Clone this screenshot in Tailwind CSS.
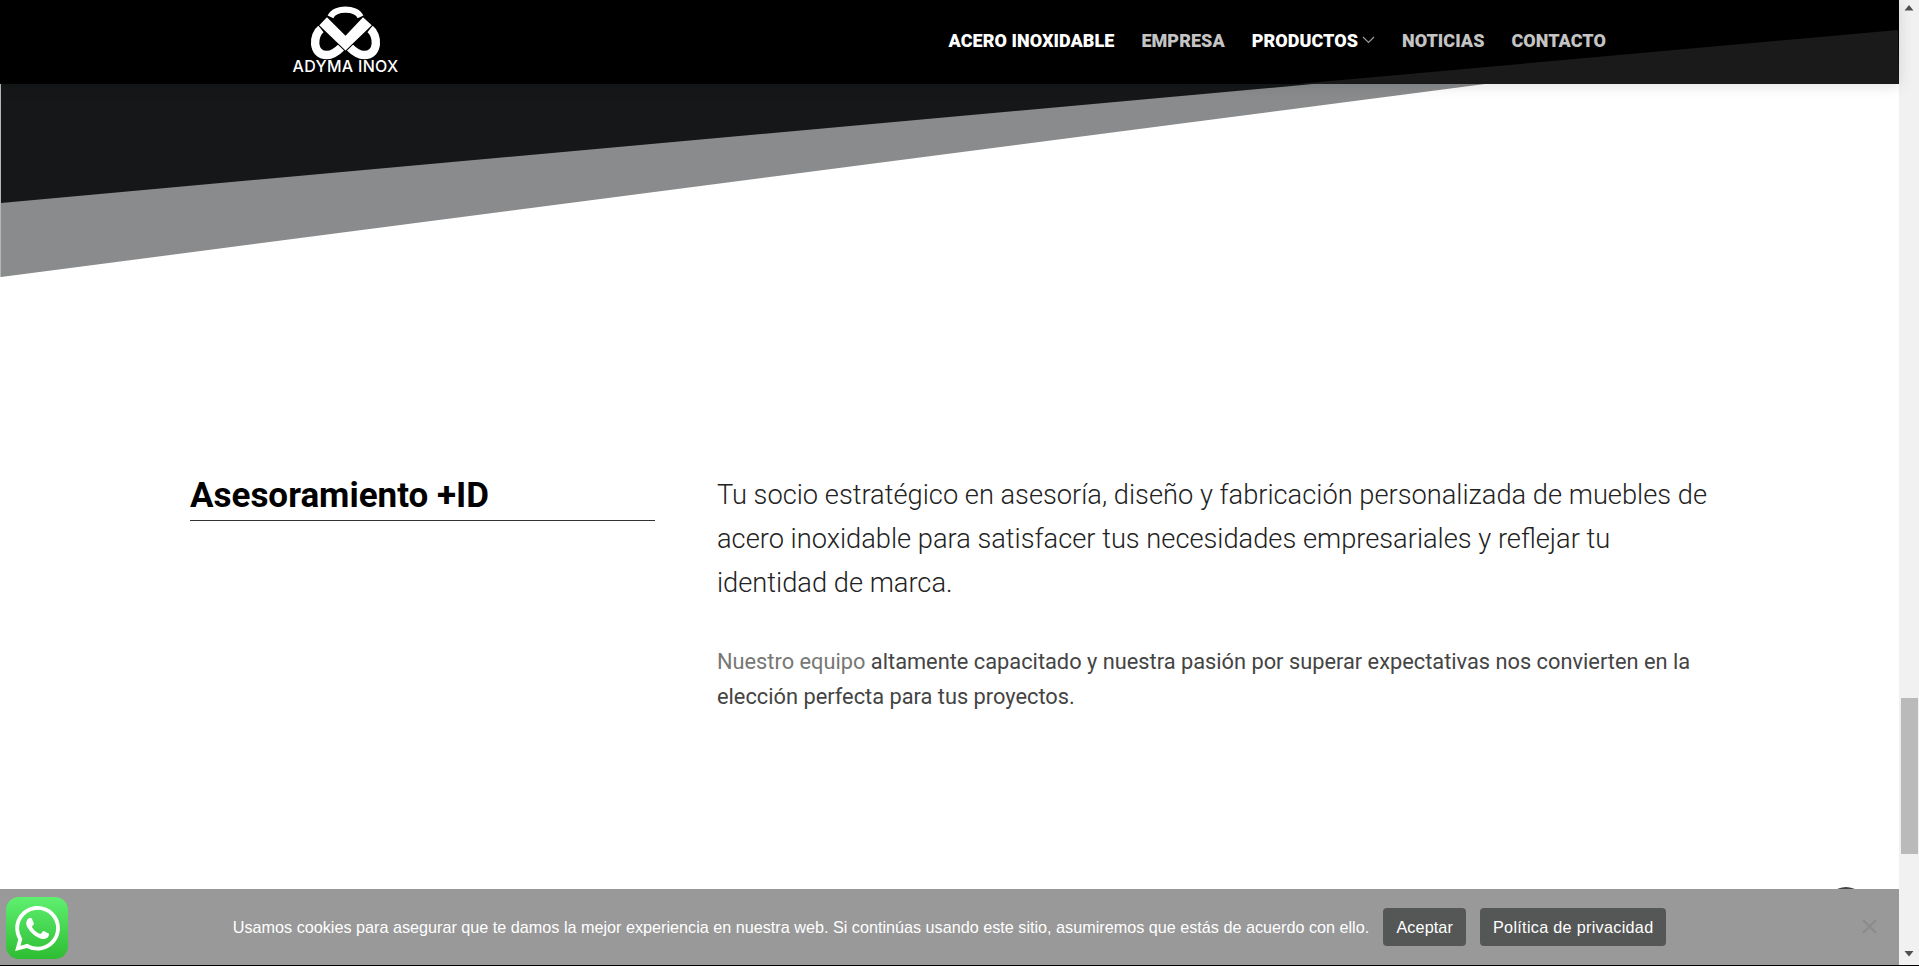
<!DOCTYPE html>
<html lang="es">
<head>
    <meta charset="UTF-8">
    <title>Adyma Inox</title>
    <script src="https://cdn.jsdelivr.net/npm/@tailwindcss/browser@4"></script>
</head>
<body class="bg-white overflow-hidden">
<div class="relative flex w-[1919px] h-[966px] overflow-hidden font-['Roboto',sans-serif]">
    <main class="relative w-[1899px] h-full bg-white">
        <!-- Cuña diagonal -->
        <svg class="absolute left-0 top-0" width="1899" height="300" viewBox="0 0 1899 300">
            <polygon points="1,84 1485,84 1,277" fill="#8a8b8c"/>
            <polygon points="1,84 1313,84 1,203" fill="#161718"/>
            <rect x="0" y="84" width="1" height="193" fill="#b5b5b5"/>
        </svg>

        <!-- Cabecera -->
        <header class="relative z-10 flex items-center justify-between h-[84px] bg-black pl-[293px] pr-[293px] shadow-[0_2px_14px_rgba(0,0,0,0.12)]">
            <svg class="absolute right-0 top-0" width="602" height="84" viewBox="0 0 602 84">
                <polygon points="0,84 601,30 602,84" fill="#1a1a1a"/>
            </svg>
            <a class="relative flex flex-col items-center w-[105px] h-[84px] pt-[3px]">
                <svg width="77" height="60" viewBox="205 5 220 170">
                    <path d="M272 44 C285 16 345 16 358 44" fill="none" stroke="#fff" stroke-width="18"/>
                    <path d="M245 78 C222 95 218 153 262 153 C278 153 292 142 304 130" fill="none" stroke="#fff" stroke-width="24"/>
                    <path d="M385 78 C408 95 412 153 368 153 C352 153 338 142 326 130" fill="none" stroke="#fff" stroke-width="24"/>
                    <polygon points="262,45 315,98 365,45 390,68 315,140 240,68" fill="#fff" stroke="#000" stroke-width="6" paint-order="stroke"/>
                </svg>
                <span class="font-['Inter',sans-serif] font-medium text-[16px] leading-[14px] tracking-[0.3px] text-white whitespace-nowrap -mt-[4px]">ADYMA INOX</span>
            </a>
            <nav class="relative flex items-center gap-[27px] text-[18px] tracking-[0.05px] font-black text-[#c4c4c4] whitespace-nowrap -mt-[4px]">
                <a class="text-white">ACERO INOXIDABLE</a>
                <a>EMPRESA</a>
                <a class="flex items-center gap-[4px] text-white">PRODUCTOS
                    <svg width="13" height="8" viewBox="0 0 13 8" fill="none" stroke="#9a9a9a" stroke-width="1.2"><path d="M1 1l5.500 5.500L12 1"/></svg>
                </a>
                <a>NOTICIAS</a>
                <a>CONTACTO</a>
            </nav>
        </header>

        <!-- Asesoramiento -->
        <section class="relative flex pl-[190px] pt-[385px]">
            <div class="w-[465px] h-[52px] border-b border-[#333]">
                <h2 class="text-[35px] leading-[54px] font-bold text-black">Asesoramiento +ID</h2>
            </div>
            <div class="ml-[62px] w-[995px] pt-[4px]">
                <p class="text-[27.25px] leading-[44px] font-light text-[#222]">Tu socio estratégico en asesoría, diseño y fabricación personalizada de muebles de acero inoxidable para satisfacer tus necesidades empresariales y reflejar tu identidad de marca.</p>
                <p class="mt-[39px] text-[21.8px] leading-[35px] text-[#444]"><span class="text-[#777773]">Nuestro equipo</span> altamente capacitado y nuestra pasión por superar expectativas nos convierten en la elección perfecta para tus proyectos.</p>
            </div>
        </section>

        <!-- Elemento asomando por detrás del aviso -->
        <span class="absolute left-[1826px] top-[887px] w-[40px] h-[40px] rounded-full bg-[#444]"></span>

        <!-- Aviso de cookies -->
        <div class="absolute left-0 bottom-0 z-20 flex items-center justify-center gap-[14px] w-full h-[77px] pb-[2px] bg-[#999] font-['Liberation_Sans',sans-serif] text-[16.2px] text-white">
            <span class="whitespace-nowrap pt-[2px]">Usamos cookies para asegurar que te damos la mejor experiencia en nuestra web. Si continúas usando este sitio, asumiremos que estás de acuerdo con ello.</span>
            <a class="flex items-center justify-center w-[83px] h-[38px] pt-[1px] rounded-[4px] bg-[#555756] tracking-[0.1px]">Aceptar</a>
            <a class="flex items-center justify-center w-[186px] h-[38px] pt-[1px] rounded-[4px] bg-[#555756] tracking-[0.3px]">Política de privacidad</a>
            <svg class="absolute left-[1862px] top-[30px]" width="15" height="15" viewBox="0 0 15 15" stroke="#8c8c8c" stroke-width="2.4"><path d="M1 1l13 13M14 1L1 14"/></svg>
        </div>

        <!-- WhatsApp -->
        <a class="absolute left-[6px] top-[897px] z-30 flex items-center justify-center w-[62px] h-[62px] rounded-[13px] bg-gradient-to-b from-[#5ef06f] to-[#2dbd32]">
            <svg width="45" height="45" viewBox="0 0 24 24" fill="#fff"><path d="M17.472 14.382c-.297-.149-1.758-.867-2.03-.967-.273-.099-.471-.148-.67.15-.197.297-.767.966-.94 1.164-.173.199-.347.223-.644.075-.297-.15-1.255-.463-2.39-1.475-.883-.788-1.48-1.761-1.653-2.059-.173-.297-.018-.458.13-.606.134-.133.298-.347.446-.52.149-.174.198-.298.298-.497.099-.198.05-.371-.025-.52-.075-.149-.669-1.612-.916-2.207-.242-.579-.487-.5-.669-.51-.173-.008-.371-.01-.57-.01-.198 0-.52.074-.792.372-.272.297-1.04 1.016-1.04 2.479 0 1.462 1.065 2.875 1.213 3.074.149.198 2.096 3.2 5.077 4.487.709.306 1.262.489 1.694.625.712.227 1.36.195 1.871.118.571-.085 1.758-.719 2.006-1.413.248-.694.248-1.289.173-1.413-.074-.124-.272-.198-.57-.347m-5.421 7.403h-.004a9.87 9.87 0 01-5.031-1.378l-.361-.214-3.741.982.998-3.648-.235-.374a9.86 9.86 0 01-1.51-5.26c.001-5.45 4.436-9.884 9.888-9.884 2.64 0 5.122 1.03 6.988 2.898a9.825 9.825 0 012.893 6.994c-.003 5.45-4.437 9.884-9.885 9.884m8.413-18.297A11.815 11.815 0 0012.05 0C5.495 0 .16 5.335.157 11.892c0 2.096.547 4.142 1.588 5.945L.057 24l6.305-1.654a11.882 11.882 0 005.683 1.448h.005c6.554 0 11.89-5.335 11.893-11.893a11.821 11.821 0 00-3.48-8.413z"/></svg>
        </a>
    </main>

    <!-- Barra de desplazamiento -->
    <aside class="relative w-[20px] h-full bg-[#f1f1f1]">
        <svg class="absolute left-[5px] top-[5px]" width="10" height="6" viewBox="0 0 10 6" fill="#505050"><path d="M5 0l4.500 5.500h-9z"/></svg>
        <div class="absolute left-[2px] top-[698px] w-[17px] h-[156px] bg-[#bababa]"></div>
        <svg class="absolute left-[5px] top-[951px]" width="10" height="6" viewBox="0 0 10 6" fill="#505050"><path d="M5 5.500L9.500 0h-9z"/></svg>
    </aside>

    <div class="absolute left-0 bottom-0 z-40 w-full h-px bg-black"></div>
</div>
</body>
</html>
